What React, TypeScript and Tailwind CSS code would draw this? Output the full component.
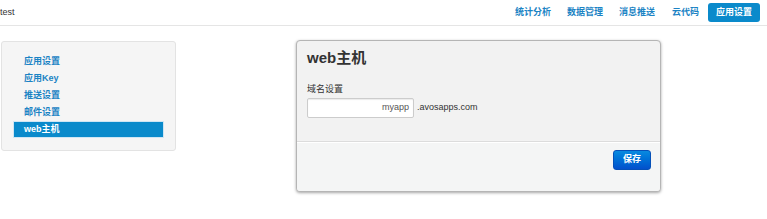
export default function App() {
  const font = "font-['Liberation_Sans','Noto_Sans_CJK_SC',sans-serif]";
  const items = ['应用设置', '应用Key', '推送设置', '邮件设置', 'web主机'];

  return (
    <div className={`w-[767px] h-[219px] bg-white ${font} text-[#333]`}>
      {/* top bar */}
      <div className="flex items-center justify-between h-[26px] border-b border-[#e5e5e5] pr-[7px]">
        <span className="text-[9px] leading-none">test</span>
        <nav className="flex items-center text-[9px] leading-none text-[#1b83c4] font-bold">
          <a className="mr-[16px]">统计分析</a>
          <a className="mr-[16px]">数据管理</a>
          <a className="mr-[17px]">消息推送</a>
          <a className="mr-[9px]">云代码</a>
          <a className="flex items-center justify-center w-[52px] h-[19px] rounded-[3px] bg-[#0a8acb] text-white">
            应用设置
          </a>
        </nav>
      </div>

      <div className="flex pt-[14px]">
        {/* sidebar */}
        <div className="ml-[1px] mt-[1px] w-[175px] h-[110px] rounded-[3px] border border-[#e3e3e3] bg-[#f5f5f5] px-[11px] pt-[11px]">
          {items.map((it, i) =>
            i === items.length - 1 ? (
              <div
                key={it}
                className="h-[17px] flex items-center px-[10px] bg-[#0a8acb] border border-[#cfe6f4] text-white text-[9px] font-bold"
              >
                {it}
              </div>
            ) : (
              <div key={it} className="h-[17px] flex items-center px-[11px] text-[9px] text-[#1b83c4] font-bold">
                {it}
              </div>
            ),
          )}
        </div>

        {/* panel */}
        <div className="ml-[120px] w-[365px] h-[152px] rounded-[4px] border border-[#b5b5b5] bg-[#f2f2f2] shadow-[0_1px_3px_rgba(0,0,0,0.35)] flex flex-col overflow-hidden">
          <div className="px-[10px] pt-[8px] h-[100px]">
            <h1 className="text-[15px] leading-[18px] font-bold text-[#333]">web主机</h1>
            <div className="mt-[16px] text-[9px] leading-[12px]">域名设置</div>
            <div className="mt-[3px] flex items-center">
              <div className="w-[107px] h-[20px] bg-white border border-[#cccccc] rounded-[2px] flex items-center justify-end pr-[4px] text-[9px] text-[#555] shadow-[inset_0_1px_1px_rgba(0,0,0,0.08)]">
                myapp
              </div>
              <span className="ml-[3px] text-[9px] text-[#333]">.avosapps.com</span>
            </div>
          </div>
          <div className="flex-1 border-t border-[#dcdcdc] bg-[#f4f5f5] shadow-[inset_0_1px_0_#ffffff] flex justify-end items-start pt-[8px] pr-[9px]">
            <button className="w-[38px] h-[20px] rounded-[3px] border border-[#0550b8] bg-gradient-to-b from-[#0a8ae0] to-[#0450cc] text-white text-[9px] font-bold flex items-center justify-center">
              保存
            </button>
          </div>
        </div>
      </div>
    </div>
  );
}
